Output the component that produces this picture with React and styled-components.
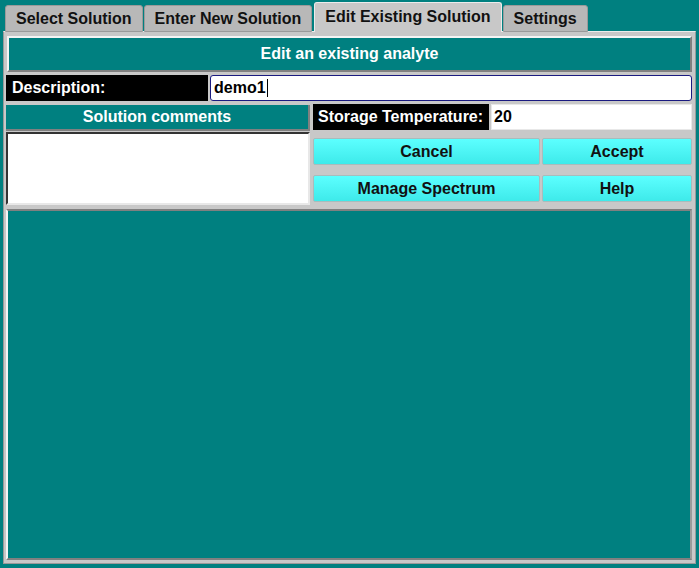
import React from "react";
import styled, { createGlobalStyle } from "styled-components";

const GlobalStyle = createGlobalStyle`
  html, body {
    margin: 0;
    padding: 0;
    background: #008080;
  }
  body {
    font-family: "Liberation Sans", Arial, sans-serif;
    font-weight: bold;
    font-size: 16px;
  }
`;

const tabs = [
  { label: "Select Solution" },
  { label: "Enter New Solution" },
  { label: "Edit Existing Solution", active: true },
  { label: "Settings" },
];

function App() {
  return (
    <>
      <GlobalStyle />
      <Window>
        <TabBar>
          {tabs.map((t) => (
            <Tab key={t.label} $active={t.active}>
              {t.label}
            </Tab>
          ))}
        </TabBar>
        <Panel>
          <Header>Edit an existing analyte</Header>
          <DescRow>
            <Label>Description:</Label>
            <TextInput $focused>
              demo1<Caret />
            </TextInput>
          </DescRow>
          <MiddleRow>
            <LeftColumn>
              <SubHeader>Solution comments</SubHeader>
              <Comments />
            </LeftColumn>
            <RightColumn>
              <TempRow>
                <Label $pad="5px">Storage Temperature:</Label>
                <TextInput>20</TextInput>
              </TempRow>
              <Buttons>
                <Button>Cancel</Button>
                <Button>Accept</Button>
                <Button>Manage Spectrum</Button>
                <Button>Help</Button>
              </Buttons>
            </RightColumn>
          </MiddleRow>
          <Canvas />
        </Panel>
      </Window>
    </>
  );
}

export default App;

const Window = styled.div`
  width: 699px;
  height: 568px;
  box-sizing: border-box;
  padding: 3px 3px 4px 3px;
  display: flex;
  flex-direction: column;
`;

const TabBar = styled.div`
  display: flex;
  align-items: flex-end;
  height: 29px;
  padding-left: 2px;
  gap: 1px;
  margin-bottom: -1px;
  position: relative;
  z-index: 1;
`;

const Tab = styled.div`
  box-sizing: border-box;
  height: ${(p) => (p.$active ? "30px" : "27px")};
  padding: 0 10px ${(p) => (p.$active ? "2px" : "0")};
  margin-left: ${(p) => (p.$active ? "1px" : "0")};
  display: flex;
  align-items: center;
  background: ${(p) => (p.$active ? "#c8c8c8" : "#b8b8b8")};
  border: 1px solid ${(p) => (p.$active ? "#ececec" : "#9a9a9a")};
  border-bottom: ${(p) => (p.$active ? "none" : "1px solid #9a9a9a")};
  border-radius: 3px 3px 0 0;
  color: #111;
  white-space: nowrap;
`;

const Panel = styled.div`
  flex: 1;
  box-sizing: border-box;
  background: #c8c8c8;
  border: 1px solid #9a9a9a;
  border-top-color: #ececec;
  padding: 4px 3px 3px 2px;
  display: flex;
  flex-direction: column;
  gap: 3px;
`;

const Header = styled.div`
  box-sizing: border-box;
  height: 36px;
  margin-left: 1px;
  background: #008080;
  color: #fff;
  display: flex;
  align-items: center;
  justify-content: center;
  border: 2px solid #808080;
  border-top-color: #f4f4f4;
  border-left-color: #f4f4f4;
`;

const DescRow = styled.div`
  display: grid;
  grid-template-columns: 202px 1fr;
  gap: 2px;
  height: 26px;
`;

const Label = styled.div`
  background: #000;
  color: #fff;
  display: flex;
  align-items: center;
  padding-left: ${(p) => p.$pad || "6px"};
  white-space: nowrap;
`;

const TextInput = styled.div`
  box-sizing: border-box;
  background: #fff;
  color: #000;
  display: flex;
  align-items: center;
  padding-left: ${(p) => (p.$focused ? "3px" : "2px")};
  border: 1px solid ${(p) => (p.$focused ? "#1a1a80" : "#e8e8e8")};
  border-radius: ${(p) => (p.$focused ? "3px" : "0")};
`;

const Caret = styled.span`
  display: inline-block;
  width: 1px;
  height: 18px;
  background: #000;
  margin-left: 1px;
`;

const MiddleRow = styled.div`
  display: grid;
  grid-template-columns: 304px 1fr;
  gap: 3px;
  height: 101px;
`;

const LeftColumn = styled.div`
  display: flex;
  flex-direction: column;
  gap: 1px;
  padding-top: 1px;
`;

const SubHeader = styled.div`
  box-sizing: border-box;
  height: 26px;
  background: #008080;
  color: #fff;
  display: flex;
  align-items: center;
  justify-content: center;
  border-right: 2px solid #808080;
  border-bottom: 2px solid #808080;
`;

const Comments = styled.div`
  flex: 1;
  box-sizing: border-box;
  background: #fff;
  border: 2px solid #e8e8e8;
  border-top-color: #333;
  border-left-color: #333;
`;

const RightColumn = styled.div`
  display: flex;
  flex-direction: column;
  gap: 8px;
`;

const TempRow = styled.div`
  display: grid;
  grid-template-columns: 176px 1fr;
  gap: 2px;
  height: 26px;
`;

const Buttons = styled.div`
  display: grid;
  grid-template-columns: 227px 1fr;
  grid-auto-rows: 27px;
  column-gap: 2px;
  row-gap: 10px;
`;

const Button = styled.div`
  box-sizing: border-box;
  display: flex;
  align-items: center;
  justify-content: center;
  color: #111;
  background: linear-gradient(#5cffff, #3eeaea);
  border: 1px solid #a8bcbc;
  border-radius: 2px;
`;

const Canvas = styled.div`
  flex: 1;
  box-sizing: border-box;
  margin-top: 1px;
  background: #008080;
  border: 2px solid #f4f4f4;
  border-top-color: #808080;
  border-left-color: #f4f4f4;
  border-right-color: #9a9a9a;
  border-bottom-color: #808080;
`;
